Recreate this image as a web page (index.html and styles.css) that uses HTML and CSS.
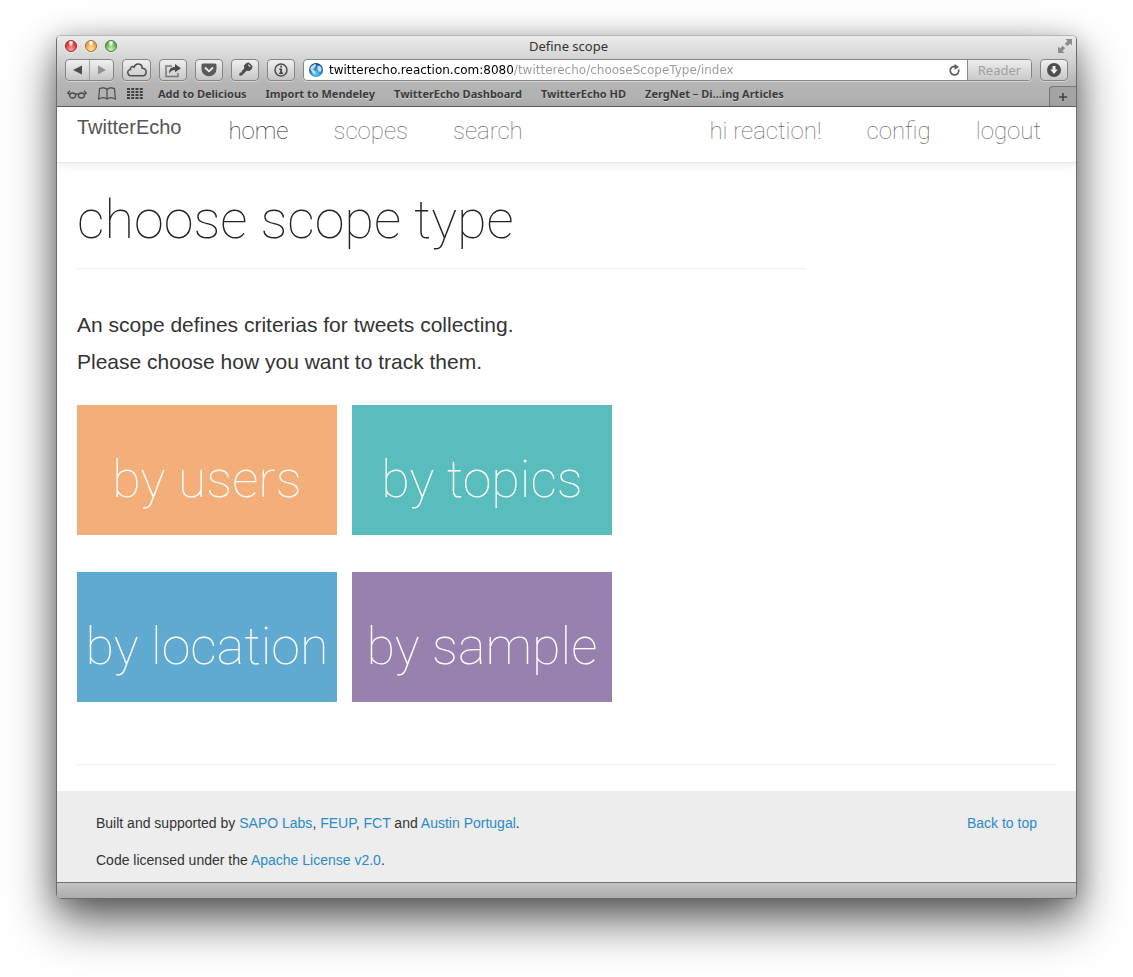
FILE: index.html
```html
<!DOCTYPE html>
<html lang="en">
<head>
<meta charset="utf-8">
<title>Define scope</title>
<link rel="stylesheet" href="styles.css">
</head>
<body>
<div class="window">
  <div class="chrome">
    <div class="titlebar">
      <div class="lights">
        <button class="light light-close" type="button" aria-label="Close"></button>
        <button class="light light-min" type="button" aria-label="Minimize"></button>
        <button class="light light-zoom" type="button" aria-label="Zoom"></button>
      </div>
      <div class="window-title">Define scope</div>
      <button class="plain fullscreen" type="button" aria-label="Full screen">
        <svg width="14" height="14" viewBox="0 0 14 14" fill="#8c8c8c"><path d="M7.500 0H14v6.500l-2-2L9.300 7.200 6.800 4.700l2.700-2.700zM0 7.500l2 2 2.700-2.700 2.500 2.500L4.500 12l2 2H0z"/></svg>
      </button>
    </div>
    <div class="toolbar">
      <div class="nav-pair">
        <button class="plain half" type="button" aria-label="Back"><svg width="10" height="10" viewBox="0 0 10 10"><path d="M0 5 9 .5v9z" fill="#4d4d4d"/></svg></button>
        <button class="plain half half-next" type="button" aria-label="Forward"><svg width="10" height="10" viewBox="0 0 10 10"><path d="M9 5 1 .5v9z" fill="#929292"/></svg></button>
      </div>
      <button class="tool tool-wide" type="button" aria-label="iCloud tabs"><svg width="20" height="14" viewBox="0 0 20 14" fill="none" stroke="#4c4c4c" stroke-width="1.500"><path d="M5 12.800C-.300 12.800-.400 6.900 3.600 6.500 2.800 4 5.700 2.800 7 4.300 8.400-.300 15-.100 15.200 5.200 20.600 5.100 20.200 12.800 15.500 12.800z"/></svg></button>
      <button class="tool" type="button" aria-label="Share"><svg width="18" height="15" viewBox="0 0 18 15"><path d="M8 3H2v10.500h12V10" fill="none" stroke="#777" stroke-width="1.500"/><path d="M5 10.500C5 6 7 4 11 4V1l6 4.200-6 4V7C8.500 7 7 8 5 10.500z" fill="#4c4c4c"/></svg></button>
      <button class="tool" type="button" aria-label="Save to Pocket"><svg width="16" height="14" viewBox="0 0 16 14"><path d="M2 .5h12a1.500 1.500 0 0 1 1.500 1.500v4a7.500 7.300 0 0 1-15 0V2A1.500 1.500 0 0 1 2 .5z" fill="#5a5a5a"/><path d="M4.500 5 8 8.300 11.500 5" fill="none" stroke="#eee" stroke-width="1.800" stroke-linecap="round" stroke-linejoin="round"/></svg></button>
      <button class="tool" type="button" aria-label="Passwords"><svg width="16" height="16" viewBox="0 0 16 16"><g transform="rotate(45 8 8)"><path d="M5.500 0h5l1.500 2v3.500L9.700 7.500V14L8 16l-1.500-1.500V13l1-1-1-1V7.500L4 5.500V2z" fill="#4c4c4c"/><path d="M6.500 2h3" stroke="#ddd" stroke-width="1.200"/></g></svg></button>
      <button class="tool" type="button" aria-label="Page info"><svg width="14" height="14" viewBox="0 0 14 14"><circle cx="7" cy="7" r="6" fill="none" stroke="#4c4c4c" stroke-width="1.500"/><path d="M6.200 2.800h1.800v1.700H6.200zM5.300 5.500H8v4h1V11H5.200V9.500h1V7h-.9z" fill="#444"/></svg></button>
      <div class="address">
        <svg class="globe" width="14" height="14" viewBox="0 0 14 14"><defs><radialGradient id="sea" cx=".5" cy=".75" r=".7"><stop offset="0" stop-color="#5fd0f8"/><stop offset=".55" stop-color="#2382cc"/><stop offset="1" stop-color="#123f8e"/></radialGradient></defs><circle cx="7" cy="7" r="7" fill="url(#sea)"/><path d="M2 3.500 5.500 1l2 .7L6.300 4 4 6.500 6.500 9l-1.200 3L3 9 1.200 6zM8.500 2.500l2.800.5 1.500 3-1.300 3-2-.7L8.200 5.500z" fill="#d5f1f8" opacity=".85"/></svg>
        <input class="url" type="text" aria-label="Address" value="twitterecho.reaction.com:8080/twitterecho/chooseScopeType/index">
        <button class="plain reload" type="button" aria-label="Reload"><svg width="12" height="12" viewBox="0 0 12 12"><path d="M9.500 4.800A4.300 4.300 0 1 1 6 2.400" fill="none" stroke="#5c5c5c" stroke-width="1.700" transform="rotate(12 6 6)"/><path d="M5.500 0 10 3 5.500 5.800z" fill="#5c5c5c"/></svg></button>
        <button class="plain reader" type="button">Reader</button>
      </div>
      <button class="tool" type="button" aria-label="Downloads"><svg width="14" height="14" viewBox="0 0 14 14"><circle cx="7" cy="7" r="7" fill="#4d4d4d"/><path d="M5.500 3h3v3.500h2.300L7 11 3.200 6.500h2.300z" fill="#eee"/></svg></button>
    </div>
    <div class="bookmarks">
      <div class="bookmark-icons">
        <button class="plain" type="button" aria-label="Reading list"><svg width="20" height="12" viewBox="0 0 20 12" fill="none" stroke="#4a4a4a" stroke-width="1.300"><ellipse cx="5.600" cy="7.500" rx="3" ry="2.500"/><ellipse cx="14.400" cy="7.500" rx="3" ry="2.500"/><path d="M8.400 6.700c1-1 2.200-1 3.200 0M2.600 6.500.7 5.200 3 2.700M17.400 6.500l1.900-1.300L17 2.700"/></svg></button>
        <button class="plain" type="button" aria-label="Bookmarks"><svg width="18" height="13" viewBox="0 0 18 13" fill="none" stroke="#4a4a4a" stroke-width="1.200"><path d="M9 2.500C7.500.7 4 .3 1.500 1.800L.7 12C3.500 10.300 7 10.300 9 12c2-1.700 5.500-1.700 8.300 0l-.8-10.200C14 .3 10.500.7 9 2.500zM9 2.500V12"/></svg></button>
        <button class="plain" type="button" aria-label="Top sites"><svg width="16" height="11" viewBox="0 0 16 11"><path d="M0 1h16M0 4h16M0 7h16M0 10h16" stroke="#404040" stroke-width="2" stroke-dasharray="3 1.250"/></svg></button>
      </div>
      <a class="bookmark" href="#">Add to Delicious</a>
      <a class="bookmark" href="#">Import to Mendeley</a>
      <a class="bookmark" href="#">TwitterEcho Dashboard</a>
      <a class="bookmark" href="#">TwitterEcho HD</a>
      <a class="bookmark" href="#">ZergNet – Di...ing Articles</a>
      <button class="plain new-tab" type="button" aria-label="New tab"><svg width="8" height="8" viewBox="0 0 8 8"><path d="M4 0v8M0 4h8" stroke="#444" stroke-width="1.600"/></svg></button>
    </div>
  </div>

  <div class="page">
    <header class="navbar">
      <a class="brand" href="#">TwitterEcho</a>
      <nav class="links">
        <a class="active" href="#">home</a>
        <a href="#">scopes</a>
        <a href="#">search</a>
      </nav>
      <nav class="links links-right">
        <a href="#">hi reaction!</a>
        <a href="#">config</a>
        <a href="#">logout</a>
      </nav>
    </header>
    <main class="content">
      <h1 class="heading">choose scope type</h1>
      <p class="lead">An scope defines criterias for tweets collecting.<br>Please choose how you want to track them.</p>
      <div class="tiles">
        <a class="tile tile-users" href="#">by users</a>
        <a class="tile tile-topics" href="#">by topics</a>
        <a class="tile tile-location" href="#">by location</a>
        <a class="tile tile-sample" href="#">by sample</a>
      </div>
    </main>
    <footer class="footer">
      <div class="credits">
        <p>Built and supported by <a href="#">SAPO Labs</a>, <a href="#">FEUP</a>, <a href="#">FCT</a> and <a href="#">Austin Portugal</a>.</p>
        <p>Code licensed under the <a href="#">Apache License v2.0</a>.</p>
      </div>
      <a href="#">Back to top</a>
    </footer>
  </div>
  <div class="statusbar"></div>
</div>
</body>
</html>
```

FILE: styles.css
```css
* { box-sizing: border-box; }
body {
  margin: 0;
  min-height: 100vh;
  padding: 35px 56px 78px;
  display: flex;
  background: #fff;
  color: #333;
  font-family: "Liberation Sans", Arial, sans-serif;
}
a { text-decoration: none; color: #2a8bc8; }
p { margin: 0; }
svg { display: block; flex: none; }
button { font: inherit; padding: 0; }
.window {
  flex: 1;
  min-width: 0;
  display: flex;
  flex-direction: column;
  border: 1px solid #6b6b6b;
  border-top-color: #b5b5b5;
  border-radius: 5px;
  overflow: hidden;
  box-shadow: 0 22px 48px rgba(0, 0, 0, .62), 0 4px 24px rgba(0, 0, 0, .22);
}

/* Browser chrome */
.chrome {
  background: linear-gradient(#ebebeb, #d2d2d2 35%, #b5b5b5 66%, #b0b0b0);
  border-bottom: 1px solid #606060;
  font-family: "Noto Sans", sans-serif;
  color: #333;
}
.plain { border: 0; background: none; display: flex; align-items: center; justify-content: center; }
.titlebar {
  height: 23px;
  padding: 0 4px 3px 8px;
  display: grid;
  grid-template-columns: 1fr auto 1fr;
  align-items: center;
}
.lights { display: flex; gap: 8px; }
.light { width: 12px; height: 12px; border-radius: 50%; border: 1px solid #555; box-shadow: 0 1px 0 #eee; }
.light-close { border-color: #99242a; background: radial-gradient(ellipse at 50% 15%, #fff 0 12%, transparent 38%), radial-gradient(circle at 50% 90%, #ffaaa5, #e0343c 65%); }
.light-min { border-color: #a06a24; background: radial-gradient(ellipse at 50% 15%, #fff 0 12%, transparent 38%), radial-gradient(circle at 50% 90%, #ffe9a0, #f0a040 65%); }
.light-zoom { border-color: #3f7838; background: radial-gradient(ellipse at 50% 15%, #fff 0 12%, transparent 38%), radial-gradient(circle at 50% 90%, #d0f8b0, #62b458 65%); }
.window-title { font-size: 13px; line-height: 18px; }
.fullscreen { justify-self: end; }
.toolbar { padding: 0 8px; display: flex; gap: 8px; }
.nav-pair, .tool, .address {
  height: 22px;
  border: 1px solid #858585;
  border-radius: 4px;
  box-shadow: 0 1px 0 #d4d4d4;
}
.nav-pair, .tool { background: linear-gradient(#f0f0f0, #c6c6c6); }
.nav-pair { width: 49px; display: flex; }
.half { flex: 1; }
.half-next { border-left: 1px solid #a0a0a0; }
.tool { width: 28px; display: flex; align-items: center; justify-content: center; }
.tool-wide { width: 29px; }
.address { flex: 1; display: flex; align-items: center; background: #fff; overflow: hidden; }
.globe { margin-left: 5px; }
.url {
  flex: 1;
  min-width: 0;
  border: 0;
  padding: 0 0 0 6px;
  font: 12px/18px "DejaVu Sans", sans-serif;
  color: transparent;
  background: linear-gradient(90deg, #000 190px, #999 190px);
  -webkit-background-clip: text;
  background-clip: text;
}
.reload { width: 24px; }
.reader {
  align-self: stretch;
  width: 64px;
  border-left: 1px solid #8a8a8a;
  background: linear-gradient(#ededed, #c9c9c9);
  color: #a0a0a0;
  font-size: 13px;
}
.bookmarks { height: 25px; padding-left: 10px; display: flex; align-items: center; gap: 19px; }
.bookmark-icons { display: flex; align-items: center; gap: 11px; margin-right: -4px; }
.bookmark { font-size: 11px; font-weight: 700; color: #3b3b3b; text-shadow: 0 1px 0 #d2d2d2; white-space: nowrap; }
.new-tab {
  align-self: flex-end;
  margin-left: auto;
  width: 27px;
  height: 20px;
  border: 1px solid #777;
  border-width: 1px 0 0 1px;
  border-radius: 4px 0 0 0;
  background: #a4a4a4;
}

/* Web page */
.page { flex: 1; display: flex; flex-direction: column; background: #fff; }
.navbar {
  min-height: 56px;
  padding: 0 35px 0 20px;
  display: flex;
  align-items: flex-start;
  border-bottom: 1px solid #e8e8e8;
  box-shadow: 0 1px 10px rgba(0, 0, 0, .1);
  white-space: nowrap;
}
.brand { padding-top: 8px; margin-right: 47px; font-size: 20px; line-height: 24px; color: #555; }
.links { display: flex; gap: 45px; padding-top: 8px; }
.links a { font: 100 24px/32px Roboto, sans-serif; color: #666; }
.links .active { color: #222; }
.links-right { margin-left: auto; }
.content { padding: 25px 20px 0; }
.heading {
  margin: 0 0 37px;
  max-width: 729px;
  padding-bottom: 17px;
  border-bottom: 1px solid #eee;
  font: 100 54px/63px Roboto, sans-serif;
  color: #222;
}
.lead { font-size: 21px; line-height: 37px; color: #333; }
.tiles { margin-top: 25px; display: grid; grid-template-columns: 260px 260px; gap: 37px 15px; }
.tile {
  height: 130px;
  padding-top: 20px;
  display: flex;
  align-items: center;
  justify-content: center;
  font: 100 52px/60px Roboto, sans-serif;
  color: #fff;
  white-space: nowrap;
}
.tile-users { background: #f3ae7a; }
.tile-topics { background: #58bdbc; }
.tile-location { background: #60aad2; }
.tile-sample { background: #9981af; }
.content::after { content: ""; display: block; margin: 62px 0 26px; border-top: 1px solid #eee; }
.footer {
  flex: 1;
  padding: 22px 39px 11px;
  display: flex;
  justify-content: space-between;
  background: #ededed;
  font-size: 14px;
  line-height: 20px;
}
.credits { display: flex; flex-direction: column; gap: 17px; }
.statusbar { height: 16px; border-top: 1px solid #707070; background: linear-gradient(#c4c4c4, #adadad); }
```
